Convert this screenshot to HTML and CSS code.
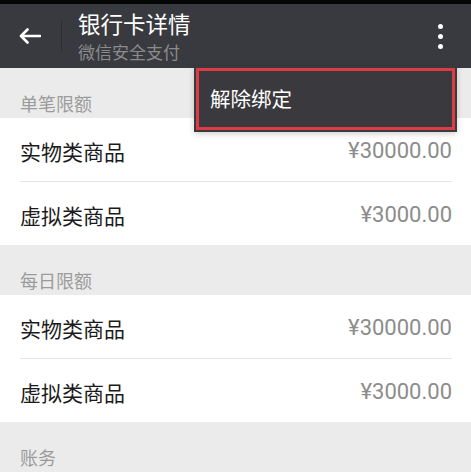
FILE: index.html
```html
<!DOCTYPE html>
<html lang="zh-CN">
<head>
<meta charset="utf-8">
<title>银行卡详情</title>
<link rel="stylesheet" href="styles.css">
</head>
<body>
<div class="status"></div>
<header class="appbar">
  <div class="back">
    <svg width="22" height="16" viewBox="0 0 22 16" aria-hidden="true">
      <path d="M21 8H2M8.5 1.5L2 8l6.5 6.5" fill="none" stroke="#fff" stroke-width="2.6" stroke-linecap="round" stroke-linejoin="round"/>
    </svg>
  </div>
  <div class="sep"></div>
  <div class="titles">
    <div class="title">银行卡详情</div>
    <div class="subtitle">微信安全支付</div>
  </div>
  <div class="more">
    <span class="dot"></span><span class="dot"></span><span class="dot"></span>
  </div>
</header>

<main>
  <div class="section-head">单笔限额</div>
  <div class="group">
    <div class="row"><span class="label">实物类商品</span><span class="value">¥30000.00</span></div>
    <div class="row"><span class="label">虚拟类商品</span><span class="value">¥3000.00</span></div>
  </div>
  <div class="section-head">每日限额</div>
  <div class="group">
    <div class="row"><span class="label">实物类商品</span><span class="value">¥30000.00</span></div>
    <div class="row"><span class="label">虚拟类商品</span><span class="value">¥3000.00</span></div>
  </div>
  <div class="section-head">账务</div>
  <div class="group">
    <div class="row"></div>
  </div>
</main>

<div class="menu">
  <div class="menu-item">解除绑定</div>
</div>
</body>
</html>
```

FILE: styles.css
```css
* { box-sizing: border-box; }
html, body {
  margin: 0;
  padding: 0;
  background: #ffffff;
  font-family: "Roboto", "Noto Sans CJK SC", sans-serif;
  overflow: hidden;
  height: 475px;
}
.status {
  height: 4px;
  background: #050505;
}
.appbar {
  height: 64px;
  background: #393a3f;
  display: flex;
  align-items: center;
}
.back {
  width: 61px;
  height: 64px;
  display: flex;
  align-items: center;
  padding-left: 19px;
}
.sep {
  width: 1px;
  height: 32px;
  background: #2e2f33;
}
.titles {
  flex: 1;
  align-self: stretch;
  display: flex;
  flex-direction: column;
  gap: 5px;
  padding-left: 16px;
  padding-top: 6px;
}
.title {
  font-family: "Noto Sans CJK SC", sans-serif;
  font-size: 22.5px;
  line-height: 26px;
  color: #ffffff;
}
.subtitle {
  font-family: "Noto Sans CJK SC", sans-serif;
  font-size: 17px;
  line-height: 22px;
  color: #8b8b8d;
}
.more {
  width: 60px;
  height: 64px;
  display: flex;
  flex-direction: column;
  align-items: center;
  justify-content: center;
  gap: 5px;
  padding-right: 2px;
}
.dot {
  width: 5px;
  height: 5px;
  border-radius: 50%;
  background: #ffffff;
}
.section-head {
  height: 50px;
  background: #ebebeb;
  padding: 22px 20px 0;
  font-family: "Noto Sans CJK SC", sans-serif;
  font-size: 18px;
  line-height: 26px;
  color: #9b9b9b;
}
.group {
  background: #ffffff;
  padding: 0 19px 0 20px;
}
.row {
  height: 63.5px;
  display: flex;
  align-items: center;
  justify-content: space-between;
  border-bottom: 1px solid #e6e6e6;
  padding-top: 3px;
}
.row:last-child { border-bottom: none; }
.label {
  font-family: "Noto Sans CJK SC", sans-serif;
  font-size: 21px;
  color: #1b1b1b;
}
.value {
  font-size: 22px;
  color: #8c8c8c;
}
.menu {
  position: absolute;
  top: 66px;
  left: 194px;
  width: 263px;
  height: 66px;
  background: #3a393e;
  padding: 2px;
  box-shadow: 0 2px 6px rgba(0, 0, 0, 0.18);
}
.menu-item {
  height: 100%;
  border: 3px solid #dc3d45;
  padding-left: 11px;
  padding-bottom: 2px;
  display: flex;
  align-items: center;
  font-family: "Noto Sans CJK SC", sans-serif;
  font-size: 20.5px;
  color: #ffffff;
}
```
